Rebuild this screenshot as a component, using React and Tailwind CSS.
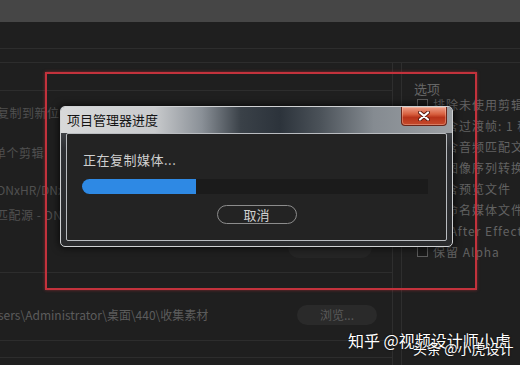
import React from 'react';

const options = [
  { label: '排除未使用剪辑' },
  { label: '包含过渡帧: 1 秒' },
  { label: '包含音频匹配文件' },
  { label: '将图像序列转换为剪辑' },
  { label: '包含预览文件' },
  { label: '重命名媒体文件以匹配剪辑名' },
  { label: '将 After Effects 合成转换为剪辑' },
  { label: '保留 Alpha' },
];

const CloseButton = () => (
  <div className="w-[46px] h-[19px] rounded-b-[4px] border border-t-0 border-[#6b2418] bg-[linear-gradient(180deg,#eea08a_0%,#d8603f_40%,#b8341a_58%,#c64a2c_100%)] shadow-[inset_0_0_0_1px_rgba(255,220,200,0.35)] flex items-center justify-center">
    <svg width="12" height="10" viewBox="0 0 12 10">
      <path d="M2 1.5 L10 8.5 M10 1.5 L2 8.5" stroke="#5a1a10" strokeWidth="4" strokeLinecap="round" />
      <path d="M2 1.5 L10 8.5 M10 1.5 L2 8.5" stroke="#ffffff" strokeWidth="2.2" strokeLinecap="round" />
    </svg>
  </div>
);

const ProgressDialog = () => (
  <div className="absolute left-[60px] top-[106px] w-[393px] h-[141px] rounded-[5px] border border-[#cfd1d3] bg-[linear-gradient(180deg,#5a5e63_0%,#2e3034_30%,#2a2b2d_100%)] shadow-[0_0_8px_rgba(0,0,0,0.9)] flex flex-col overflow-hidden font-['Noto_Sans_CJK_SC',sans-serif]">
    <div className="h-[26px] flex items-start justify-between pl-[6px] pr-[5px] bg-[linear-gradient(90deg,#d8d9da_0%,#c8cacc_24%,#8a9097_36%,#3a4148_46%,#2c333b_56%,#4a5158_66%,#858b91_80%,#9ca0a4_100%)]">
      <span className="text-[13px] leading-[26px] text-[#141414]">项目管理器进度</span>
      <CloseButton />
    </div>
    <div className="flex-1 mx-[5px] mb-[5px] border border-[#b9bcc0] rounded-[2px] bg-[#232323] flex flex-col">
      <p className="pl-[16px] mt-[18px] text-[13px] leading-[16px] tracking-[0.5px] text-[#cfcfcf]">正在复制媒体...</p>
      <div className="ml-[15px] mt-[11px] w-[346px] h-[15px] rounded-l-full bg-[#1b1b1b] flex">
        <div className="w-[114px] h-full rounded-l-full bg-[#2e89e4]" />
      </div>
      <button className="mx-auto mt-[11px] w-[80px] h-[19px] rounded-full border border-[#8c8c8c] text-[13px] leading-[17px] text-[#d2d2d2]">
        取消
      </button>
    </div>
  </div>
);

const App = () => {
  return (
    <div className="relative w-[520px] h-[365px] overflow-hidden bg-[#1f1f1f] font-['Noto_Sans_CJK_SC',sans-serif]">
      <div className="h-[22px] bg-[#464646]" />
      <div className="h-[27px] border-b border-[#2d2d2d]" />
      <div className="h-[14px] border-b border-[#2d2d2d]" />

      <div className="flex h-[302px]">
        {/* left pane */}
        <div className="w-[393px] shrink-0 border-r border-[#2e2e2e] flex flex-col text-[12px] leading-[16px] text-[#505050] whitespace-nowrap">
          <div className="h-[28px] shrink-0 border-b border-[#2d2d2d]" />
          <p className="mt-[14px] ml-[-3px] tracking-[0.5px]">复制到新位置</p>
          <p className="mt-[24px] ml-[-6px] tracking-[0.5px]">单个剪辑</p>
          <p className="mt-[21px] ml-[-3px]">DNxHR/DNxHD</p>
          <p className="mt-[9px] ml-[-4px] tracking-[0.5px]">匹配源 - DNxHR</p>
          <div className="mt-[13px] ml-[288px] w-[84px] h-[22px] shrink-0 rounded-full bg-[#252525]" />
          <div className="mt-[14px] border-t border-[#2d2d2d]" />
          <div className="mt-[32px] h-[20px] flex items-center">
            <span className="ml-[-2px] text-[12px] text-[#5c5c5c]">sers\Administrator\桌面\440\收集素材</span>
            <button className="ml-auto mr-[15px] w-[80px] h-[20px] rounded-full bg-[#2a2a2a] text-[12px] text-[#5a5a5a]">
              浏览...
            </button>
          </div>
          <div className="mt-[15px] border-t border-[#2d2d2d]" />
          <div className="mt-[16px] border-t border-[#2d2d2d]" />
        </div>

        {/* right pane */}
        <div className="ml-[8px] flex-1 min-w-0 overflow-hidden border-l border-[#2e2e2e] pt-[17px] whitespace-nowrap">
          <p className="pl-[12px] h-[18px] text-[13px] leading-[18px] text-[#666]">选项</p>
          <div className="mt-[-4px] flex flex-col">
            {options.map((o) => (
              <div key={o.label} className="h-[21px] pl-[15px] flex items-center gap-[5px]">
                <span className="w-[11px] h-[11px] shrink-0 border border-[#5c5c5c] bg-[#1a1a1a]" />
                <span className="text-[12px] tracking-[1px] text-[#626262]">{o.label}</span>
              </div>
            ))}
          </div>
        </div>
      </div>

      {/* highlight box */}
      <div className="absolute left-[45px] top-[72px] w-[432px] h-[218px] border-2 border-[#c3323c] shadow-[0_0_3px_rgba(200,50,60,0.6)]" />

      <ProgressDialog />

      {/* watermarks */}
      <div className="absolute left-[348px] top-[330px] text-[16px] leading-[20px] text-white [text-shadow:0_0_2px_rgba(0,0,0,0.9)]">
        知乎 @视频设计师小虎
      </div>
      <div className="absolute left-[413px] top-[340px] text-[14px] leading-[17px] text-white [text-shadow:0_0_2px_rgba(0,0,0,0.9)]">
        头条 @小虎设计
      </div>
    </div>
  );
};

export default App;
